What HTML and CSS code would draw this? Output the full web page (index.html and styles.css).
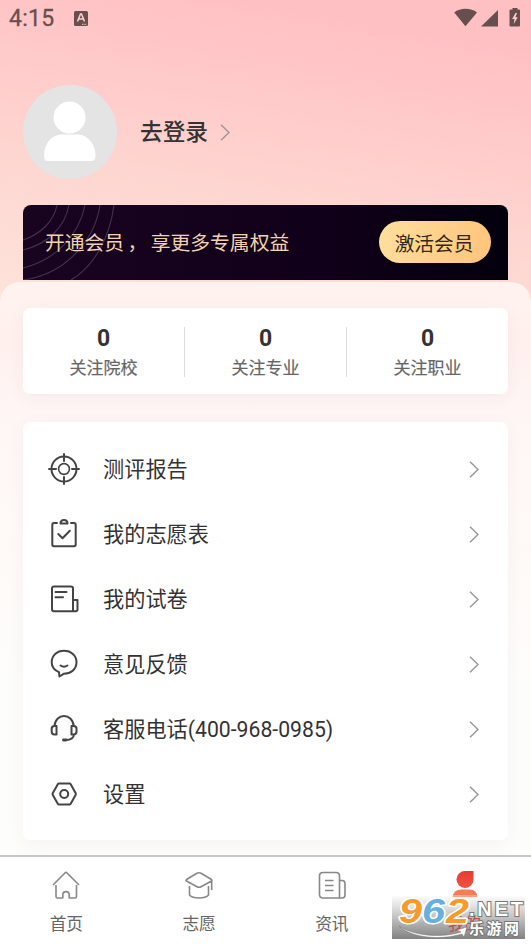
FILE: index.html
```html
<!DOCTYPE html>
<html lang="zh-CN">
<head>
<meta charset="utf-8">
<title>我的</title>
<link rel="stylesheet" href="styles.css">
</head>
<body>
<div class="screen">
  <header class="status">
    <span class="clock">4:15</span>
    <svg class="ime" viewBox="0 0 14 15"><rect width="14" height="15" rx="1.5" fill="#684f4f"/><path d="M3.5 10.500 6.500 3h1l3 7.500M4.700 8h4.600" fill="none" stroke="#fbd0d0" stroke-width="1.500"/><path d="M8 13.300h4.500" stroke="#fbd0d0" stroke-dasharray="1 .6"/></svg>
    <svg class="signals" viewBox="0 0 68 20"><g fill="#684f4f"><path d="M.2 4.500C6-.5 17-.5 23 4.500L11.500 18.200z"/><path d="M44 2v16.500H27z"/><path d="M58.500 0h5v1.500h1.500q1 0 1 1v15q0 1-1 1h-8.500q-1 0-1-1v-15q0-1 1-1h2z"/></g><path d="M61.500 5l-3.300 6h2.300l-.8 5 4-6.700h-2.300l1.600-4.300z" fill="#ffd0d0"/></svg>
  </header>

  <section class="profile">
    <svg class="avatar" viewBox="0 0 94 94"><circle cx="47" cy="47" r="47" fill="#e4e4e4"/><g fill="#fff"><circle cx="46.500" cy="32.500" r="16"/><path d="M21 71C21 57 30 49.500 39 49.500H54C64 49.500 72.500 58 72.500 71Q72.500 76 68 76H25Q21 76 21 71z"/></g></svg>
    <h1 class="login">去登录</h1>
    <svg class="chevron" viewBox="0 0 10 17"><path d="M1 .8 9 8.500 1 16.200"/></svg>
  </section>

  <section class="vip">
    <svg class="rings" viewBox="0 0 100 75"><g fill="none" stroke="#43324d" stroke-width="1.100"><path d="M0 35C18 29 31 16 34 0"/><path d="M0 45C25 39 42 22 46 0"/><path d="M0 63C32 55 56 31 62 0"/><path d="M0 75C44 69 72 34 77 0"/><path d="M48 75C72 61 87 31 91 0"/></g></svg>
    <p class="vip-text">开通会员 ， 享更多专属权益</p>
    <button class="vip-button">激活会员</button>
  </section>

  <main class="panel">
    <section class="card stats">
      <div class="stat"><b>0</b><span>关注院校</span></div>
      <div class="stat"><b>0</b><span>关注专业</span></div>
      <div class="stat"><b>0</b><span>关注职业</span></div>
    </section>
    <nav class="card menu">
      <a class="row"><svg class="icon" viewBox="0 0 32 32"><circle cx="16" cy="16" r="12.500"/><circle cx="16" cy="16" r="5.400" stroke-width="1.600"/><path d="M16 1v7M16 24v7M1 16h7M24 16h7"/></svg><span>测评报告</span><svg class="chevron" viewBox="0 0 10 17"><path d="M1 .8 9 8.500 1 16.200"/></svg></a>
      <a class="row"><svg class="icon" viewBox="0 0 32 32"><path d="M9 5H6Q4.300 5 4.300 6.700V26.500Q4.300 28.200 6 28.200H26Q27.700 28.200 27.700 26.500V6.700Q27.700 5 26 5H23M12.500 5.500C12.500 .8 19.500 .8 19.500 5.500zM10.300 16l4.200 4.200 7.300-7.500"/></svg><span>我的志愿表</span><svg class="chevron" viewBox="0 0 10 17"><path d="M1 .8 9 8.500 1 16.200"/></svg></a>
      <a class="row"><svg class="icon" viewBox="0 0 32 32"><path d="M24.500 28.200H6Q4 28.200 4 26.200V5.500Q4 3.500 6 3.500H23Q25 3.500 25 5.500V27.500M25 17H29.500V26.500Q29.500 28.200 27.500 28.200H24M7.500 9h11M7.500 14.300h7.500"/></svg><span>我的试卷</span><svg class="chevron" viewBox="0 0 10 17"><path d="M1 .8 9 8.500 1 16.200"/></svg></a>
      <a class="row"><svg class="icon" viewBox="0 0 32 32"><path d="M11 24.200C6 22 3.700 18.500 3.700 14.300C3.700 7.500 9 2.800 16 2.800S28.500 7.500 28.500 14.300C28.500 21.500 22.500 25.700 16 25.700L11.500 28.500zM12.500 17.500Q16 20 19.500 17.500"/></svg><span>意见反馈</span><svg class="chevron" viewBox="0 0 10 17"><path d="M1 .8 9 8.500 1 16.200"/></svg></a>
      <a class="row"><svg class="icon" viewBox="0 0 32 32"><path d="M6.500 13C7.500 -.500 24.500 -.500 25.700 13M8.500 13H6.500Q3.700 13 3.700 15.500V18.500Q3.700 21.500 6.500 21.500H8.500zM23.500 13H25.500Q28.500 13 28.500 15.500V18.500Q28.500 21.500 25.500 21.500H23.500zM26 21.500Q25.500 26.700 18 27"/><path d="M15.500 27h2.500" stroke-width="2.800"/></svg><span>客服电话(400-968-0985)</span><svg class="chevron" viewBox="0 0 10 17"><path d="M1 .8 9 8.500 1 16.200"/></svg></a>
      <a class="row"><svg class="icon" viewBox="0 0 32 32"><path d="M11 5.500H21.500Q22.300 5.500 22.700 6.200L27.700 15.200Q28 16 27.700 16.700L22.700 25.800Q22.300 26.500 21.500 26.500H11Q10.200 26.500 9.800 25.800L4.700 16.700Q4.300 16 4.700 15.200L9.800 6.200Q10.200 5.500 11 5.500z"/><circle cx="16.200" cy="16" r="4"/></svg><span>设置</span><svg class="chevron" viewBox="0 0 10 17"><path d="M1 .8 9 8.500 1 16.200"/></svg></a>
    </nav>
  </main>

  <footer class="tabs">
    <a class="tab"><svg viewBox="0 0 32 32"><path d="M3 16 15.200 3.700Q16 3 16.800 3.700L29 16M6 16V27.500Q6 29 7.500 29H12.800V26C12.800 21.500 19.200 21.500 19.200 26V29H25Q26.500 29 26.500 27.500V16"/></svg><span>首页</span></a>
    <a class="tab"><svg viewBox="0 0 32 32"><path d="M3.500 10.500 13.500 4.500Q16 3 18.500 4.500L28.500 10.500Q29.500 11.300 28.500 12L18.500 17.500Q16 19 13.500 17.500L3.500 12Q2.500 11.300 3.500 10.500zM6.500 17V26C10 30 22 30 25.500 26V17M28.700 12V21"/></svg><span>志愿</span></a>
    <a class="tab"><svg viewBox="0 0 32 32"><path d="M7 3.500H20Q23.500 3.500 23.500 7V29H7Q3.500 29 3.500 25.500V7Q3.500 3.500 7 3.500zM23.500 11.500H26Q29 11.500 29 14.500V26Q29 29 26 29H23M9 11.500h8.500M9 16.500h8.500M9 21.500h8.500"/></svg><span>资讯</span></a>
    <a class="tab active"><svg viewBox="0 0 32 32"><defs><linearGradient id="red" x2="0" y2="1"><stop stop-color="#e63a35"/><stop offset="1" stop-color="#f05442"/></linearGradient></defs><path class="fill" fill="url(#red)" d="M16 2H24.500V11A8.500 8.500 0 1 1 16 2z"/><path class="fill" fill="#f57c56" d="M3.500 28Q4.500 20.500 12 20.500H21Q27.500 20.500 28.500 28z"/></svg><span>我的</span></a>
    <div class="haze"></div>
    <svg class="stamp" viewBox="0 0 139 50">
      <path d="M7 36C25 48 55 47 69 42L65 40 75 37 72 47 70 44C46 51 18 47 7 36z" fill="#fff" stroke="#777" stroke-width=".5"/>
      <g class="digits"><text class="orange" x="7" y="33" textLength="23" lengthAdjust="spacingAndGlyphs">9</text><text class="blue" x="30" y="33" textLength="23" lengthAdjust="spacingAndGlyphs">6</text><text class="orange" x="54" y="33" textLength="23" lengthAdjust="spacingAndGlyphs">2</text></g>
      <text class="net" x="77" y="26" textLength="54">.NET</text>
      <text class="site" x="77" y="44" textLength="50">乐游网</text>
    </svg>
  </footer>
</div>
</body>
</html>
```
FILE: styles.css
```css
* { box-sizing: border-box; }

body {
  margin: 0;
  font-family: Roboto, "Noto Sans CJK SC", sans-serif;
  color: #333;
}

.screen {
  display: flex;
  flex-direction: column;
  width: 531px;
  height: 945px;
  overflow: hidden;
  background: linear-gradient(190deg, #ffc0c4 50px, #ffc8c8 125px, #fed5d0 235px, #fddcd5 310px, #ffe6de 420px);
}

.status {
  display: flex;
  align-items: center;
  height: 37px;
  padding: 0 9px;
}
.clock { font-size: 23px; line-height: 37px; color: #684f4f; letter-spacing: .3px; -webkit-text-stroke: .3px #684f4f; }
.ime { width: 14px; height: 15px; margin-left: 19px; }
.signals { width: 68px; height: 20px; margin: -1px 0 0 auto; }

.profile {
  display: flex;
  align-items: center;
  height: 94px;
  margin: 48px 23px 26px;
}
.avatar { width: 94px; height: 94px; }
.login { margin: 1px 12px 0 23px; font-size: 22.700px; font-weight: 500; line-height: 32px; }
.chevron { width: 10px; height: 17px; fill: none; stroke: #999; stroke-width: 1.500; }

.vip {
  position: relative;
  display: flex;
  justify-content: space-between;
  align-items: center;
  flex: none;
  height: 75px;
  margin: 0 23px;
  padding: 0 17px 0 22px;
  border-radius: 8px 8px 0 0;
  background: linear-gradient(90deg, #190420, #11001a 60%, #03000d);
}
.rings { position: absolute; left: 0; top: 0; width: 100px; height: 75px; }
.vip-text { position: relative; margin: -3px 0 0; font-size: 19.800px; word-spacing: -1.500px; color: #f1d3b0; }
.vip-button {
  width: 112px;
  height: 42px;
  margin-top: -1px;
  padding: 0 2px 0 0;
  border: 0;
  border-radius: 21px;
  background: linear-gradient(100deg, #ffdf9e, #ffc47a);
  font: 19.700px "Noto Sans CJK SC", sans-serif;
  color: #33271c;
}

.panel {
  flex: 1;
  margin-top: 2px;
  padding: 26px 23px 0;
  border-radius: 20px 20px 0 0;
  background: linear-gradient(#fff3f0 0, #fff0ee 60px, #fef6f5 130px, #fff9f7 240px, #fdfdfb 400px);
}
.card {
  border-radius: 7px;
  background: #fff;
  box-shadow: 0 4px 18px rgba(90, 50, 50, .05);
}

.stats { display: flex; height: 86px; padding: 19px 0 17px; }
.stat {
  display: flex;
  flex-direction: column;
  align-items: center;
  flex: 1;
}
.stat + .stat { border-left: 1px solid #ddd; }
.stat b { font-size: 23px; line-height: 24px; }
.stat span { margin-top: 4px; font-size: 17px; line-height: 26px; color: #666; -webkit-text-stroke: .2px #666; }

.menu { height: 418px; margin-top: 28px; padding: 14px 29px 0 25px; }
.row { display: flex; align-items: center; height: 65px; }
.icon { width: 32px; height: 32px; fill: none; stroke: #444; stroke-width: 2; stroke-linecap: round; stroke-linejoin: round; }
.row span { margin: 2px auto 0 23px; font-size: 21.200px; line-height: 32px; }
.row .chevron { margin-top: 1px; }

.tabs {
  position: relative;
  display: flex;
  flex: none;
  height: 90px;
  border-top: 2px solid #c6c6c6;
  background: #fff;
}
.tab {
  display: flex;
  flex-direction: column;
  align-items: center;
  flex: 1;
  padding-top: 12px;
  font-size: 16.700px;
  line-height: 24px;
  color: #666;
}
.tab svg { width: 32px; height: 32px; fill: none; stroke: #888; stroke-width: 1.600; stroke-linejoin: round; }
.tab .fill { stroke: none; }
.tab span { margin-top: 12px; }
.tab.active span { z-index: 1; color: #b5524e; }

.haze {
  position: absolute;
  left: 392px;
  top: 38px;
  width: 133px;
  height: 44px;
  background: linear-gradient(rgba(255, 255, 255, .3), rgba(170, 170, 170, .7) 50%, rgba(108, 108, 108, .85));
}
.stamp { position: absolute; z-index: 2; left: 392px; top: 33px; width: 139px; height: 50px; }
.digits {
  font: italic 700 34.500px "Liberation Sans", sans-serif;
  stroke: #fff;
  stroke-width: 3px;
  stroke-linejoin: round;
  paint-order: stroke;
}
.orange { fill: #f79a2c; }
.blue { fill: #64b0df; }
.net, .site { fill: #fff; stroke: #777; stroke-width: 2px; paint-order: stroke; }
.net { font: 700 20px "Liberation Sans", sans-serif; }
.site { font: 700 15px "Noto Sans CJK SC", sans-serif; }
```
